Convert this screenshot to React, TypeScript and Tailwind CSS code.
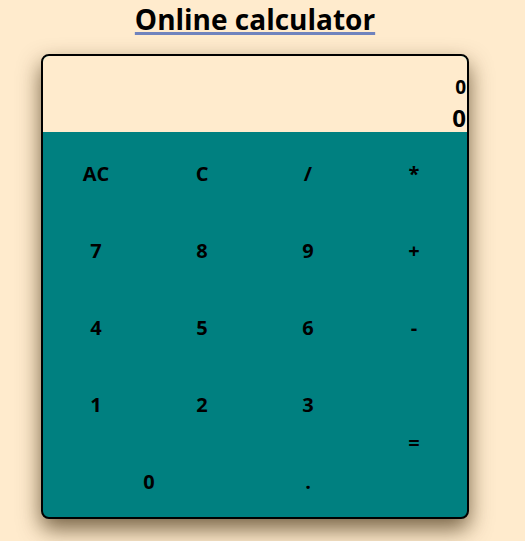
import React from "react";

const keys: { label: string; cls?: string }[] = [
  { label: "AC" },
  { label: "C" },
  { label: "/" },
  { label: "*" },
  { label: "7" },
  { label: "8" },
  { label: "9" },
  { label: "+" },
  { label: "4" },
  { label: "5" },
  { label: "6" },
  { label: "-" },
  { label: "1" },
  { label: "2" },
  { label: "3" },
  { label: "=", cls: "row-span-2" },
  { label: "0", cls: "col-span-2" },
  { label: "." },
];

export default function App() {
  return (
    <div
      className="min-h-[541px] bg-[#ffebcd] text-black"
      style={{ fontFamily: '"Open Sans", "Noto Sans", sans-serif' }}
    >
      <div className="w-[510px] flex flex-col items-center">
        <h1 className="text-[28px] leading-[38px] font-bold underline decoration-[#7083bd] decoration-[length:3px] underline-offset-[2px] mb-[16px]">
          Online calculator
        </h1>
        <div className="w-[428px] border-2 border-black rounded-[8px] overflow-hidden bg-[#008080] shadow-[0_10px_22px_rgba(60,40,10,0.7)]">
          <div className="h-[76px] bg-[#ffebcd] flex flex-col items-end justify-end pr-[1px] font-bold">
            <div className="text-[19px] leading-[33px]">0</div>
            <div className="text-[24px] leading-[28px]">0</div>
          </div>
          <div className="grid grid-cols-4 auto-rows-[77px]">
            {keys.map((k) => (
              <div
                key={k.label}
                className={`flex items-center justify-center pt-[6px] text-[20px] font-bold ${k.cls ?? ""}`}
              >
                {k.label}
              </div>
            ))}
          </div>
        </div>
      </div>
    </div>
  );
}
